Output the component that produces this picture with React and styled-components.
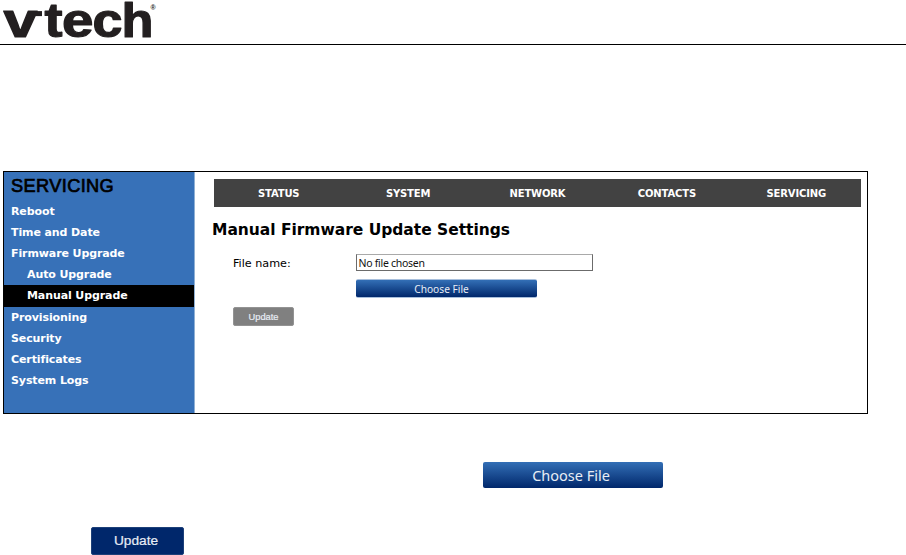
import React from 'react';
import styled, { createGlobalStyle } from 'styled-components';

const GlobalStyle = createGlobalStyle`
  * {
    box-sizing: border-box;
  }

  body {
    margin: 0;
    background: #fff;
    overflow: hidden;
  }
`;

const verdana = "'DejaVu Sans', sans-serif";

const Page = styled.div`
  width: 906px;
  height: 555px;
  overflow: hidden;
`;

const Header = styled.header`
  height: 45px;
  border-bottom: 1px solid #000;

  svg {
    display: block;
  }
`;

const Panel = styled.div`
  display: flex;
  width: 865px;
  height: 243px;
  margin: 126px 0 0 3px;
  border: 1px solid #000;
`;

const Sidebar = styled.nav`
  width: 191px;
  background: #3771b8;
  border-right: 1px solid #8fb0d4;
`;

const SidebarTitle = styled.div`
  height: 28.85px;
  padding-left: 7px;
  font: 18.2px/29px 'Liberation Sans', sans-serif;
  letter-spacing: 0.38px;
  -webkit-text-stroke: 0.7px #000;
  color: #000;
`;

const SidebarItem = styled.div`
  height: 21.15px;
  padding-left: ${({ $sub }) => ($sub ? 23 : 7)}px;
  background: ${({ $active }) => ($active ? '#000' : 'transparent')};
  color: #fff;
  font: bold 11px/22px ${verdana};
  letter-spacing: -0.1px;
  white-space: nowrap;
`;

const Main = styled.main`
  flex: 1;
  padding: 7px 6px 0 19px;
`;

const TopNav = styled.nav`
  display: grid;
  grid-template-columns: repeat(5, 1fr);
  height: 28px;
  background: #424242;
`;

const TopNavItem = styled.div`
  color: #fff;
  font: bold 10px/29px ${verdana};
  letter-spacing: -0.15px;
  text-align: center;
`;

const Heading = styled.h1`
  height: 47px;
  margin: 0 0 0 -2px;
  color: #000;
  font: bold 15.5px/46px ${verdana};
  letter-spacing: -0.03px;
  white-space: nowrap;
`;

const Form = styled.div`
  display: grid;
  grid-template-columns: 123px auto;
  justify-content: start;
  padding-left: 19px;
`;

const Label = styled.label`
  font: 11.2px/20px ${verdana};
  color: #000;
`;

const FileField = styled.div`
  width: 237px;
  height: 17px;
  padding-left: 1.5px;
  border: 1px solid #6b6b6b;
  border-top-color: #a9a9a9;
  color: #111;
  font: 10.5px/16px 'Noto Sans', sans-serif;
  letter-spacing: -0.28px;
`;

const ChooseButton = styled.button`
  display: block;
  width: ${({ $large }) => ($large ? 180 : 181)}px;
  height: ${({ $large }) => ($large ? 26 : 19)}px;
  margin: ${({ $large }) => ($large ? '0' : '8px 0 0')};
  padding: 0 ${({ $large }) => ($large ? 4 : 10)}px 0 0;
  border: 0 solid #a8bfdc;
  border-width: ${({ $large }) => ($large ? '0' : '1px 0')};
  border-radius: 2px;
  background: linear-gradient(#336fb6, #00276b);
  color: #e8edf5;
  font: ${({ $large }) => ($large ? '14.5px/26px' : '10.2px/16px')} 'Noto Sans', sans-serif;
`;

const UpdateButton = styled.button`
  display: block;
  width: ${({ $large }) => ($large ? 93 : 61)}px;
  height: ${({ $large }) => ($large ? 28 : 19)}px;
  padding: 0 ${({ $large }) => ($large ? 3 : 0)}px 0 0;
  border: 1px solid ${({ $large }) => ($large ? '#1d4079' : '#939393')};
  border-radius: 2px;
  background: ${({ $large }) => ($large ? '#00276b' : '#808080')};
  color: #e8edf5;
  font: ${({ $large }) => ($large ? '13.7px/24px' : '9.3px/16px')} 'Liberation Sans', sans-serif;
  -webkit-text-stroke: 0.2px #e8edf5;
`;

const FormAction = styled.div`
  padding: 9px 0 0 19px;
`;

const Callout = styled.div`
  padding: ${({ $top, $left }) => `${$top}px 0 0 ${$left}px`};
`;

const Logo = () => (
  <svg width="160" height="44" viewBox="0 0 160 44">
    <g
      fill="#231f20"
      stroke="#231f20"
      strokeWidth="1.2"
      strokeLinejoin="round"
      fontFamily="Liberation Sans"
      fontWeight="bold"
      fontSize="48.5"
    >
      <text y="37.4" x="3.5" textLength="34" lengthAdjust="spacingAndGlyphs">v</text>
      <text y="37.4" x="44.5" textLength="18" lengthAdjust="spacingAndGlyphs">t</text>
      <text y="37.4" x="62" textLength="31.5" lengthAdjust="spacingAndGlyphs">e</text>
      <text y="37.4" x="92.5" textLength="30" lengthAdjust="spacingAndGlyphs">c</text>
      <text y="37.4" x="121.5" textLength="32" lengthAdjust="spacingAndGlyphs">h</text>
    </g>
    {/* flag on the right arm of the v */}
    <rect x="32" y="11.1" width="10" height="5" fill="#231f20" />
    <text x="150.5" y="10" fill="#231f20" fontFamily="Liberation Sans" fontWeight="bold" fontSize="7">®</text>
  </svg>
);

const sidebarItems = [
  { label: 'Reboot' },
  { label: 'Time and Date' },
  { label: 'Firmware Upgrade' },
  { label: 'Auto Upgrade', sub: true },
  { label: 'Manual Upgrade', sub: true, active: true },
  { label: 'Provisioning' },
  { label: 'Security' },
  { label: 'Certificates' },
  { label: 'System Logs' },
];

const navItems = ['STATUS', 'SYSTEM', 'NETWORK', 'CONTACTS', 'SERVICING'];

const App = () => (
  <Page>
    <GlobalStyle />
    <Header>
      <Logo />
    </Header>
    <Panel>
      <Sidebar>
        <SidebarTitle>SERVICING</SidebarTitle>
        {sidebarItems.map(({ label, sub, active }) => (
          <SidebarItem key={label} $sub={sub} $active={active}>{label}</SidebarItem>
        ))}
      </Sidebar>
      <Main>
        <TopNav>
          {navItems.map(item => <TopNavItem key={item}>{item}</TopNavItem>)}
        </TopNav>
        <Heading>Manual Firmware Update Settings</Heading>
        <Form>
          <Label>File name:</Label>
          <div>
            <FileField>No file chosen</FileField>
            <ChooseButton>Choose File</ChooseButton>
          </div>
        </Form>
        <FormAction>
          <UpdateButton>Update</UpdateButton>
        </FormAction>
      </Main>
    </Panel>
    <Callout $top={48} $left={483}>
      <ChooseButton $large>Choose File</ChooseButton>
    </Callout>
    <Callout $top={39} $left={91}>
      <UpdateButton $large>Update</UpdateButton>
    </Callout>
  </Page>
);

export default App;
